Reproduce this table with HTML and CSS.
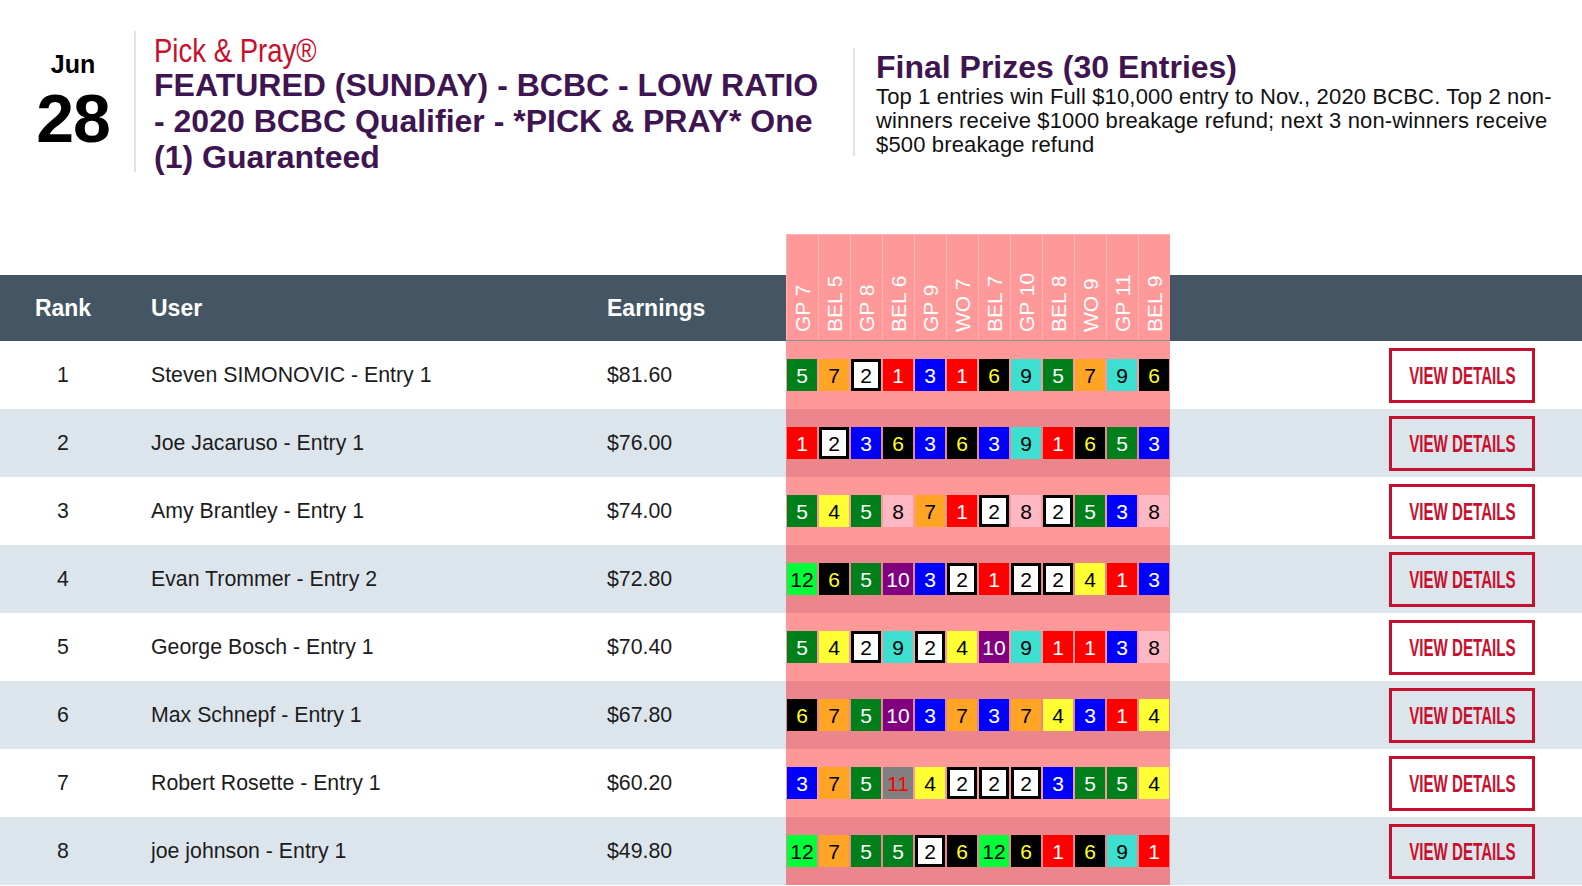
FILE: index.html
```html
<!DOCTYPE html>
<html>
<head>
<meta charset="utf-8">
<link rel="stylesheet" href="styles.css">
</head>
<body>
<header class="top">
  <div class="date">
    <div class="month">Jun</div>
    <div class="day">28</div>
  </div>
  <div class="title-block">
    <div class="brand"><span class="brand-text">Pick &amp; Pray®</span></div>
    <h1 class="title">FEATURED (SUNDAY) - BCBC - LOW RATIO - 2020 BCBC Qualifier - *PICK &amp; PRAY* One (1) Guaranteed</h1>
  </div>
  <div class="prizes">
    <h2 class="prizes-title">Final Prizes (30 Entries)</h2>
    <p class="prizes-text">Top 1 entries win Full $10,000 entry to Nov., 2020 BCBC. Top 2 non-winners receive $1000 breakage refund; next 3 non-winners receive $500 breakage refund</p>
  </div>
</header>

<section class="board">
  <div class="head-row">
    <div class="hcell rank">Rank</div>
    <div class="hcell user">User</div>
    <div class="hcell earn">Earnings</div>
    <div class="race-head">
      <div class="rh">GP 7</div><div class="rh">BEL 5</div><div class="rh">GP 8</div><div class="rh">BEL 6</div><div class="rh">GP 9</div><div class="rh">WO 7</div><div class="rh">BEL 7</div><div class="rh">GP 10</div><div class="rh">BEL 8</div><div class="rh">WO 9</div><div class="rh">GP 11</div><div class="rh">BEL 9</div>
    </div>
    <div class="hcell act"></div>
  </div>

  <div class="row">
    <div class="cell rank">1</div><div class="cell user">Steven SIMONOVIC - Entry 1</div><div class="cell earn">$81.60</div>
    <div class="picks"><span class="p p5">5</span><span class="p p7">7</span><span class="p p2">2</span><span class="p p1">1</span><span class="p p3">3</span><span class="p p1">1</span><span class="p p6">6</span><span class="p p9">9</span><span class="p p5">5</span><span class="p p7">7</span><span class="p p9">9</span><span class="p p6">6</span></div>
    <div class="cell act"><a class="btn"><span class="btn-text">VIEW DETAILS</span></a></div>
  </div>
  <div class="row alt">
    <div class="cell rank">2</div><div class="cell user">Joe Jacaruso - Entry 1</div><div class="cell earn">$76.00</div>
    <div class="picks"><span class="p p1">1</span><span class="p p2">2</span><span class="p p3">3</span><span class="p p6">6</span><span class="p p3">3</span><span class="p p6">6</span><span class="p p3">3</span><span class="p p9">9</span><span class="p p1">1</span><span class="p p6">6</span><span class="p p5">5</span><span class="p p3">3</span></div>
    <div class="cell act"><a class="btn"><span class="btn-text">VIEW DETAILS</span></a></div>
  </div>
  <div class="row">
    <div class="cell rank">3</div><div class="cell user">Amy Brantley - Entry 1</div><div class="cell earn">$74.00</div>
    <div class="picks"><span class="p p5">5</span><span class="p p4">4</span><span class="p p5">5</span><span class="p p8">8</span><span class="p p7">7</span><span class="p p1">1</span><span class="p p2">2</span><span class="p p8">8</span><span class="p p2">2</span><span class="p p5">5</span><span class="p p3">3</span><span class="p p8">8</span></div>
    <div class="cell act"><a class="btn"><span class="btn-text">VIEW DETAILS</span></a></div>
  </div>
  <div class="row alt">
    <div class="cell rank">4</div><div class="cell user">Evan Trommer - Entry 2</div><div class="cell earn">$72.80</div>
    <div class="picks"><span class="p p12">12</span><span class="p p6">6</span><span class="p p5">5</span><span class="p p10">10</span><span class="p p3">3</span><span class="p p2">2</span><span class="p p1">1</span><span class="p p2">2</span><span class="p p2">2</span><span class="p p4">4</span><span class="p p1">1</span><span class="p p3">3</span></div>
    <div class="cell act"><a class="btn"><span class="btn-text">VIEW DETAILS</span></a></div>
  </div>
  <div class="row">
    <div class="cell rank">5</div><div class="cell user">George Bosch - Entry 1</div><div class="cell earn">$70.40</div>
    <div class="picks"><span class="p p5">5</span><span class="p p4">4</span><span class="p p2">2</span><span class="p p9">9</span><span class="p p2">2</span><span class="p p4">4</span><span class="p p10">10</span><span class="p p9">9</span><span class="p p1">1</span><span class="p p1">1</span><span class="p p3">3</span><span class="p p8">8</span></div>
    <div class="cell act"><a class="btn"><span class="btn-text">VIEW DETAILS</span></a></div>
  </div>
  <div class="row alt">
    <div class="cell rank">6</div><div class="cell user">Max Schnepf - Entry 1</div><div class="cell earn">$67.80</div>
    <div class="picks"><span class="p p6">6</span><span class="p p7">7</span><span class="p p5">5</span><span class="p p10">10</span><span class="p p3">3</span><span class="p p7">7</span><span class="p p3">3</span><span class="p p7">7</span><span class="p p4">4</span><span class="p p3">3</span><span class="p p1">1</span><span class="p p4">4</span></div>
    <div class="cell act"><a class="btn"><span class="btn-text">VIEW DETAILS</span></a></div>
  </div>
  <div class="row">
    <div class="cell rank">7</div><div class="cell user">Robert Rosette - Entry 1</div><div class="cell earn">$60.20</div>
    <div class="picks"><span class="p p3">3</span><span class="p p7">7</span><span class="p p5">5</span><span class="p p11">11</span><span class="p p4">4</span><span class="p p2">2</span><span class="p p2">2</span><span class="p p2">2</span><span class="p p3">3</span><span class="p p5">5</span><span class="p p5">5</span><span class="p p4">4</span></div>
    <div class="cell act"><a class="btn"><span class="btn-text">VIEW DETAILS</span></a></div>
  </div>
  <div class="row alt">
    <div class="cell rank">8</div><div class="cell user">joe johnson - Entry 1</div><div class="cell earn">$49.80</div>
    <div class="picks"><span class="p p12">12</span><span class="p p7">7</span><span class="p p5">5</span><span class="p p5">5</span><span class="p p2">2</span><span class="p p6">6</span><span class="p p12">12</span><span class="p p6">6</span><span class="p p1">1</span><span class="p p6">6</span><span class="p p9">9</span><span class="p p1">1</span></div>
    <div class="cell act"><a class="btn"><span class="btn-text">VIEW DETAILS</span></a></div>
  </div>
</section>
</body>
</html>
```

FILE: styles.css
```css
* { box-sizing: border-box; }
html, body { margin: 0; padding: 0; background: #fff; }
body {
  font-family: "Liberation Sans", Arial, Helvetica, sans-serif;
  color: #1c1c1c;
  width: 1582px;
  height: 886px;
  overflow: hidden;
}

/* ---------- top header ---------- */
.top {
  display: flex;
  align-items: flex-start;
  padding-top: 31px;
  height: 234px;
}
.date {
  width: 136px;
  height: 141px;
  padding: 21px 0 0 12px;
  border-right: 2px solid #e2e2e2;
  text-align: center;
  color: #000;
}
.month {
  font-size: 25px;
  line-height: 25px;
  font-weight: 700;
}
.day {
  margin-top: 7px;
  font-size: 68px;
  line-height: 68px;
  font-weight: 700;
  letter-spacing: -1px;
}
.title-block {
  width: 700px;
  margin-left: 18px;
  padding-top: 3px;
}
.brand {
  height: 33px;
  line-height: 33px;
  font-size: 34px;
  color: #c8102e;
  white-space: nowrap;
}
.brand-text {
  display: inline-block;
  transform: scaleX(0.81);
  transform-origin: left center;
}
.title {
  margin: 0;
  font-size: 32px;
  line-height: 36px;
  font-weight: 700;
  color: #3f1551;
  width: 674px;
}
.prizes {
  margin-left: -1px;
  margin-top: 17px;
  height: 108px;
  border-left: 2px solid #e2e2e2;
  padding: 3px 0 0 21px;
  width: 720px;
}
.prizes-title {
  margin: 0;
  font-size: 32px;
  line-height: 32px;
  font-weight: 700;
  color: #3f1551;
}
.prizes-text {
  margin: 2px 0 0;
  font-size: 22px;
  letter-spacing: 0.15px;
  line-height: 24px;
  color: #111;
  width: 695px;
}

/* ---------- table ---------- */
.head-row,
.row {
  display: grid;
  grid-template-columns: 126px 481px 179px 384px 1fr;
}
.head-row {
  align-items: end;
  background: linear-gradient(to bottom, #fff 41px, #445664 41px);
  height: 107px;
}
.hcell {
  height: 66px;
  display: flex;
  align-items: center;
  color: #fff;
  font-weight: 700;
  font-size: 23px;
}
.hcell.rank { justify-content: center; }
.hcell.user { padding-left: 25px; }

.race-head {
  display: flex;
  height: 107px;
  background: #ff9999;
  border-top: 1px solid #ffb4b4;
  border-bottom: 1px solid #8b8f96;
}
.rh {
  width: 32px;
  height: 100%;
  writing-mode: vertical-rl;
  transform: rotate(180deg);
  line-height: 32px;
  padding-top: 8px;
  font-size: 21px;
  color: #fff;
  white-space: nowrap;
  border-right: 1px solid rgba(255, 255, 255, 0.28);
}

.row {
  height: 68px;
  background: #fff;
}
.row.alt { background: #dde5ec; }
.cell {
  display: flex;
  align-items: center;
  font-size: 21.3px;
}
.cell.rank { justify-content: center; }
.cell.user { padding-left: 25px; }

.picks {
  display: flex;
  align-items: center;
  gap: 2px;
  padding-left: 1px;
  background: #ff9999;
}
.row.alt .picks { background: #eb878c; }
.p {
  width: 30px;
  height: 32px;
  display: flex;
  align-items: center;
  justify-content: center;
  font-size: 21px;
  line-height: 1;
}
.p1 { background: #ff0000; color: #fff; }
.p2 { background: #fff; color: #000; border: 3px solid #000; }
.p3 { background: #0000ff; color: #fff; }
.p4 { background: #ffff33; color: #000; }
.p5 { background: #00801a; color: #fff; }
.p6 { background: #000; color: #ffff22; }
.p7 { background: #ffa425; color: #000; }
.p8 { background: #ffb8c4; color: #000; }
.p9 { background: #3de0d0; color: #000; }
.p10 { background: #800080; color: #fff; }
.p11 { background: #808080; color: #ff0000; }
.p12 { background: #00ff3a; color: #000; }

.cell.act {
  justify-content: flex-end;
  padding-right: 47px;
}
.btn {
  width: 146px;
  height: 55px;
  border: 3px solid #c8102e;
  display: flex;
  align-items: center;
  justify-content: center;
  color: #c8102e;
  cursor: pointer;
}
.btn-text {
  display: inline-block;
  flex: none;
  font-size: 24px;
  font-weight: 700;
  white-space: nowrap;
  transform: scaleX(0.63);
  padding-top: 1px;
}
```
